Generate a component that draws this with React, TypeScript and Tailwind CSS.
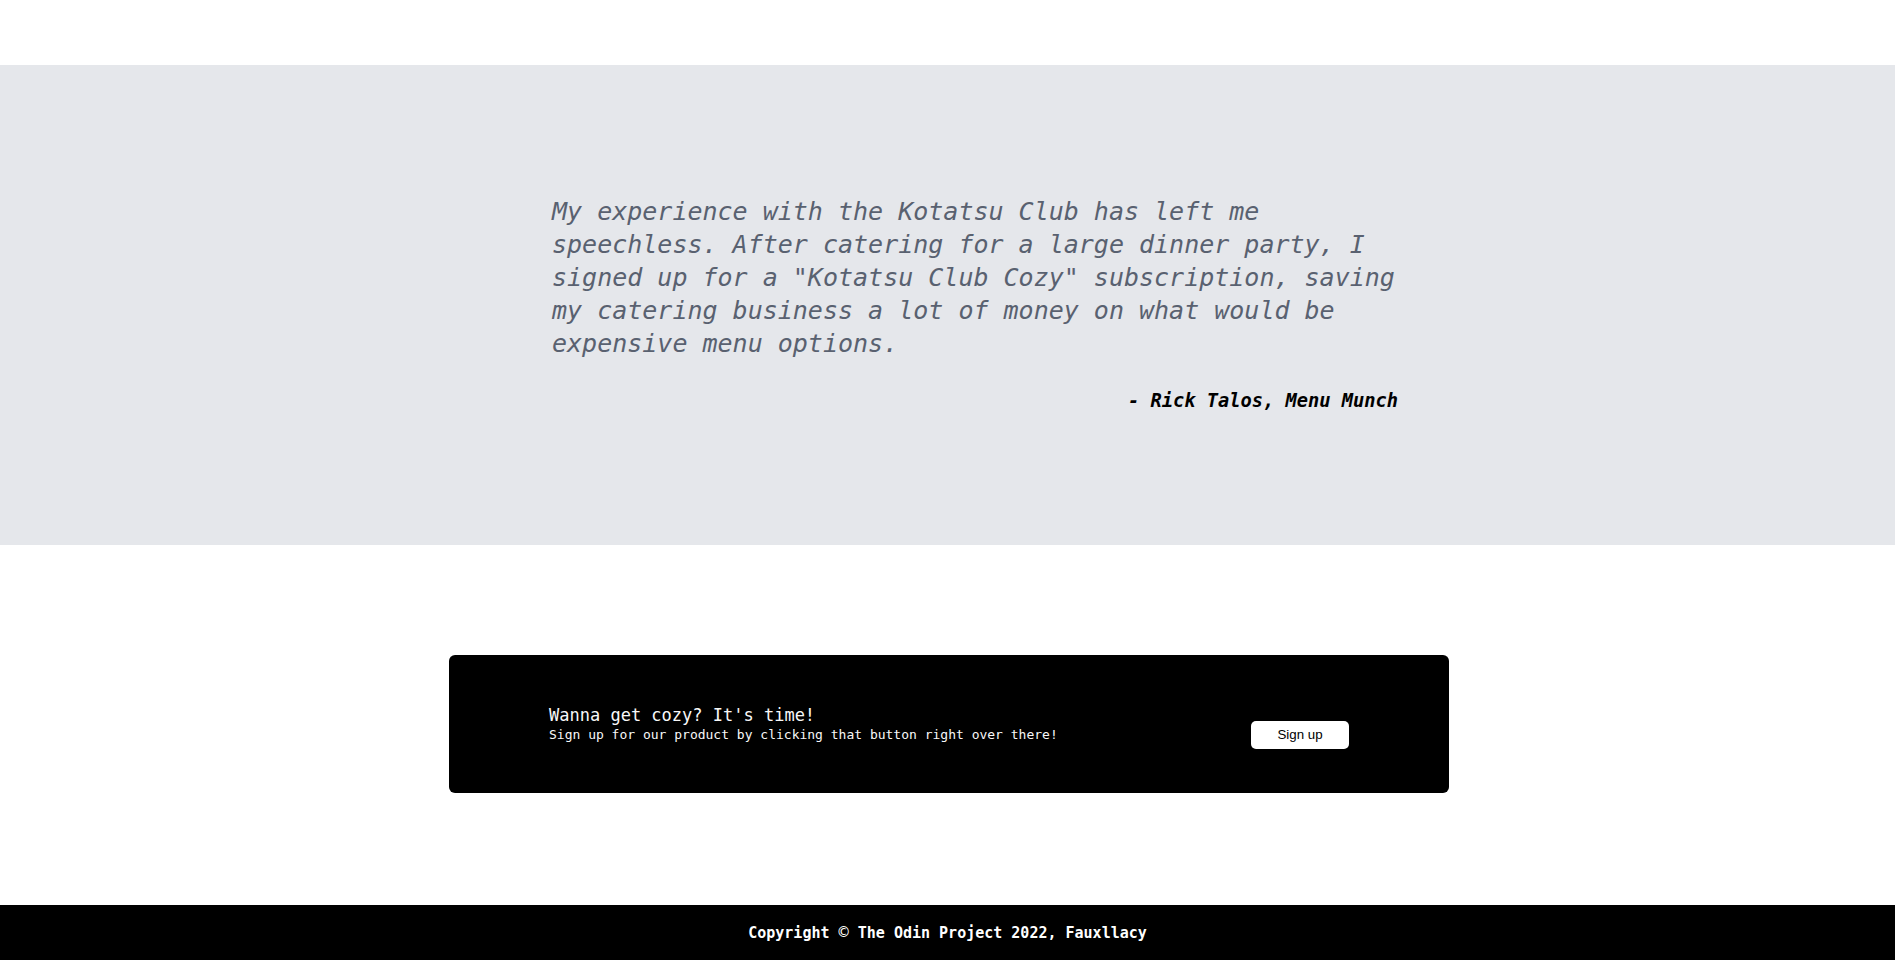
import React from 'react';

const mono = "font-['DejaVu_Sans_Mono','Liberation_Mono',monospace]";

const Testimonial: React.FC = () => (
  <section className="bg-[#e5e7eb] h-[480px] pt-[130px]">
    <div className="ml-[552px] w-[846px]">
      <p className={`${mono} italic text-[25px] leading-[33px] text-[#596170]`}>
        My experience with the Kotatsu Club has left me speechless. After catering for a large
        dinner party, I signed up for a "Kotatsu Club Cozy" subscription, saving my catering
        business a lot of money on what would be expensive menu options.
      </p>
      <p className={`${mono} italic font-bold text-[18.7px] leading-[22px] text-black text-right mt-[30px]`}>
        - Rick Talos, Menu Munch
      </p>
    </div>
  </section>
);

const CallToAction: React.FC = () => (
  <section className="bg-white h-[360px] pt-[110px]">
    <div className="ml-[449px] w-[1000px] h-[138px] bg-black rounded-md flex items-start justify-between px-[100px] pt-[50px]">
      <div className={`${mono} text-[#f8f8f8]`}>
        <h2 className="text-[17px] leading-[20px]">Wanna get cozy? It's time!</h2>
        <p className="text-[13px] leading-[16px] mt-[2px]">
          Sign up for our product by clicking that button right over there!
        </p>
      </div>
      <button className="mt-[16px] w-[98px] h-[28px] bg-white rounded-[5px] text-black text-[13.3px] font-['Liberation_Sans',Arial,sans-serif]">
        Sign up
      </button>
    </div>
  </section>
);

export default function App() {
  return (
    <div className="w-[1895px] h-[960px] bg-white overflow-hidden">
      <div className="h-[65px] bg-white" />
      <Testimonial />
      <CallToAction />
      <footer className="h-[55px] bg-black flex items-center justify-center">
        <span className={`${mono} font-bold text-[15px] text-white`}>
          Copyright <span className="text-[17px] font-normal">©</span> The Odin Project 2022, Fauxllacy
        </span>
      </footer>
    </div>
  );
}
